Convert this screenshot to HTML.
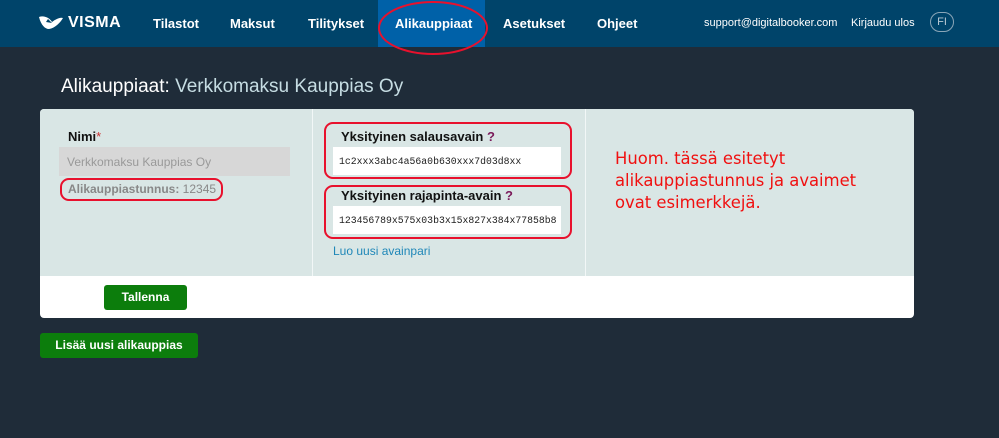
<!DOCTYPE html>
<html><head><meta charset="utf-8"><style>
*{margin:0;padding:0;box-sizing:border-box}
body{width:999px;height:438px;background:#1f2c39;font-family:"Liberation Sans",Arial,sans-serif;position:relative;overflow:hidden}
.nav{position:absolute;left:0;top:0;width:999px;height:47px;background:#00446a}
.nav .i{position:absolute;top:16px;color:#fff;font-weight:bold;font-size:13px}
.active{position:absolute;left:378px;top:0;width:107px;height:47px;background:#0061a8}
.ab{position:absolute}
h1{position:absolute;left:61px;top:76px;font-weight:normal;font-size:19px;color:#fff}
h1 span{color:#c6dde3}
.card{position:absolute;left:40px;top:109px;width:874px;height:209px;background:#fff;border-radius:4px;overflow:hidden}
.gray{position:absolute;left:0;top:0;width:874px;height:167px;background:#d9e6e5}
.div{position:absolute;top:0;width:1px;height:167px;background:#f2f7f7}
.lbl{position:absolute;font-weight:bold;font-size:13px;color:#111}
.inp{position:absolute;background:#fff;font-family:"Liberation Mono",monospace;font-size:9.8px;color:#222;padding:9px 0 0 6px;height:28px;width:228px;overflow:hidden;white-space:nowrap}
.red{position:absolute;border:2px solid #e8112d;border-radius:9px}
.btn{position:absolute;background:#0c7d0c;color:#fff;font-weight:bold;font-size:12px;text-align:center;border-radius:3px}
</style></head><body>
<div class="nav">
<div class="active"></div>
<svg class="ab" style="left:38px;top:14px" width="26" height="18" viewBox="0 0 26 18"><path d="M1 3 C6 1 12 4 14 8 C18 5 22 3 25 4 C22 9 17 14 11 15 C7 15 3 11 1 3Z" fill="#fff"/><path d="M10 5 L14 9 L8 8Z" fill="#00446a"/></svg>
<div class="i" style="left:68px;top:14px;font-size:16px;letter-spacing:0.5px">VISMA</div>
<div class="i" style="left:153px">Tilastot</div>
<div class="i" style="left:230px">Maksut</div>
<div class="i" style="left:308px">Tilitykset</div>
<div class="i" style="left:395px">Alikauppiaat</div>
<div class="i" style="left:503px">Asetukset</div>
<div class="i" style="left:597px">Ohjeet</div>
<div class="i" style="left:704px;font-weight:normal;font-size:11px;top:17px">support@digitalbooker.com</div>
<div class="i" style="left:851px;font-weight:normal;font-size:11px;top:17px">Kirjaudu ulos</div>
<div class="ab" style="left:930px;top:12px;width:24px;height:20px;border:1px solid #8aa6b8;border-radius:10px;color:#b8c8d3;font-size:11px;text-align:center;line-height:18px">FI</div>
<div class="red" style="left:378px;top:1px;width:110px;height:54px;border-radius:55px/27px"></div>
</div>
<h1>Alikauppiaat: <span>Verkkomaksu Kauppias Oy</span></h1>
<div class="card">
<div class="gray"></div>
<div class="div" style="left:272px"></div>
<div class="div" style="left:545px"></div>
<div class="lbl" style="left:28px;top:20px">Nimi<span style="color:#c33;font-weight:normal">*</span></div>
<div class="ab" style="left:19px;top:38px;width:231px;height:29px;background:#d7d7d7;color:#999;font-size:12px;padding:8px 0 0 8px">Verkkomaksu Kauppias Oy</div>
<div class="ab" style="left:28px;top:73px;font-size:12px;color:#888"><b>Alikauppiastunnus:</b> 12345</div>
<div class="lbl" style="left:301px;top:20px">Yksityinen salausavain <span style="color:#7a1a5a">?</span></div>
<div class="inp" style="left:293px;top:38px">1c2xxx3abc4a56a0b630xxx7d03d8xx</div>
<div class="lbl" style="left:301px;top:79px">Yksityinen rajapinta-avain <span style="color:#7a1a5a">?</span></div>
<div class="inp" style="left:293px;top:97px">123456789x575x03b3x15x827x384x77858b8</div>
<div class="ab" style="left:293px;top:135px;font-size:12px;color:#1f87b8">Luo uusi avainpari</div>
<div class="ab" style="left:575px;top:39px;font-size:16.4px;line-height:22px;color:#f01010;font-family:'DejaVu Sans',sans-serif">Huom. tässä esitetyt<br>alikauppiastunnus ja avaimet<br>ovat esimerkkejä.</div>
<div class="btn" style="left:64px;top:176px;width:83px;height:25px;line-height:25px">Tallenna</div>
</div>
<div class="red" style="left:60px;top:178px;width:163px;height:23px"></div>
<div class="red" style="left:324px;top:122px;width:248px;height:57px"></div>
<div class="red" style="left:324px;top:185px;width:248px;height:54px"></div>
<div class="btn" style="left:40px;top:333px;width:158px;height:25px;line-height:25px">Lisää uusi alikauppias</div>
</body></html>
